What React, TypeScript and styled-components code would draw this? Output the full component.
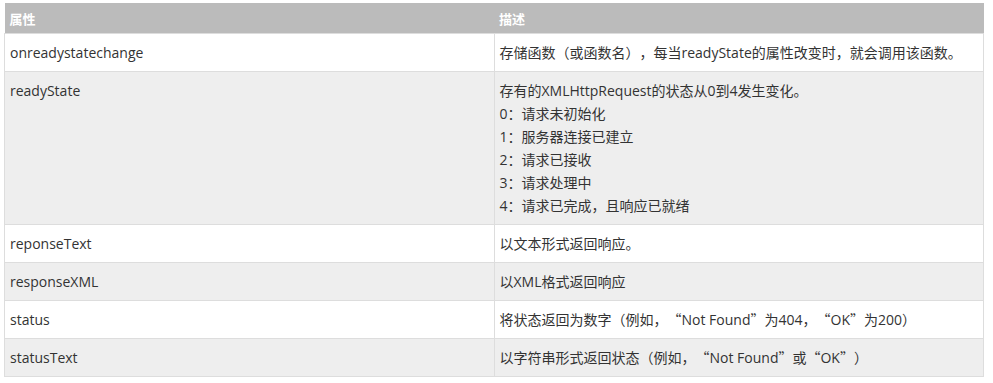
import styled, { createGlobalStyle } from 'styled-components'

const GlobalStyle = createGlobalStyle`
  body {
    margin: 0;
    background: #fff;
    font-family: "Open Sans", "Noto Sans CJK SC", sans-serif;
  }
`

const StyledWrapper = styled.div`
  padding: 3px 9px 0 4px;
`

const StyledTable = styled.table`
  width: 980px;
  border-collapse: collapse;
  table-layout: fixed;
  font-size: 14px;
  color: #333;
  text-spacing-trim: space-all;
`

const StyledHeadCell = styled.th`
  background: #bbb;
  color: #fff;
  font-weight: bold;
  font-size: 13px;
  text-align: left;
  height: 30px;
  padding: 0 5px;
  font-family: "Noto Sans CJK SC", sans-serif;
`

const StyledRow = styled.tr<{ $alt: boolean }>`
  background: ${p => (p.$alt ? '#eee' : '#fff')};
`

const StyledCell = styled.td`
  border: 1px solid #ddd;
  padding: 7px 5px;
  line-height: 23px;
  vertical-align: top;
`

const StyledLine = styled.div`
  white-space: nowrap;
`

// full-width curly quotes, as a CJK font draws them
const StyledQuote = styled.span`
  font-family: "Noto Sans CJK SC", sans-serif;
`

const rows: { name: string; desc: string[] }[] = [
  { name: 'onreadystatechange', desc: ['存储函数（或函数名），每当readyState的属性改变时，就会调用该函数。'] },
  {
    name: 'readyState',
    desc: [
      '存有的XMLHttpRequest的状态从0到4发生变化。',
      '0：请求未初始化',
      '1：服务器连接已建立',
      '2：请求已接收',
      '3：请求处理中',
      '4：请求已完成，且响应已就绪',
    ],
  },
  { name: 'reponseText', desc: ['以文本形式返回响应。'] },
  { name: 'responseXML', desc: ['以XML格式返回响应'] },
  { name: 'status', desc: ['将状态返回为数字（例如，“Not Found”为404，“OK”为200）'] },
  { name: 'statusText', desc: ['以字符串形式返回状态（例如，“Not Found”或“OK”）'] },
]

const renderLine = (text: string) =>
  text.split(/([“”])/).map((part, i) =>
    part === '“' || part === '”' ? <StyledQuote key={i}>{part}</StyledQuote> : part
  )

export default function App() {
  return (
    <StyledWrapper>
      <GlobalStyle />
      <StyledTable lang="zh-CN">
        <thead>
          <tr>
            <StyledHeadCell>属性</StyledHeadCell>
            <StyledHeadCell>描述</StyledHeadCell>
          </tr>
        </thead>
        <tbody>
          {rows.map((r, i) => (
            <StyledRow key={r.name} $alt={i % 2 === 1}>
              <StyledCell>{r.name}</StyledCell>
              <StyledCell>
                {r.desc.map(d => <StyledLine key={d}>{renderLine(d)}</StyledLine>)}
              </StyledCell>
            </StyledRow>
          ))}
        </tbody>
      </StyledTable>
    </StyledWrapper>
  )
}
